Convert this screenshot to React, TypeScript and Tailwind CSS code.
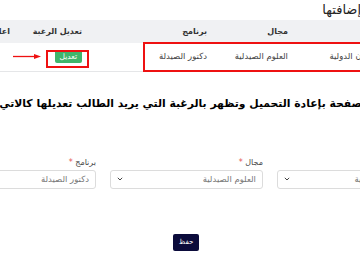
const selects = [
  { label: 'الجامعة', value: 'جامعة عمان الدولية' },
  { label: 'مجال', value: 'العلوم الصيدلية' },
  { label: 'برنامج', value: 'دكتور الصيدلة' },
]

function Chevron() {
  return (
    <svg width="6" height="4" viewBox="0 0 6 4" className="shrink-0">
      <path d="M0.8 0.8 L3 3 L5.2 0.8" fill="none" stroke="#444" strokeWidth="1" />
    </svg>
  )
}

export default function App() {
  return (
    <div className="h-[262px] w-[360px] overflow-hidden bg-white font-['DejaVu_Sans',sans-serif]">
      <div dir="rtl" className="relative ml-[-70px] mr-[-82px]">
        <div className="h-[20px] pr-[81px] text-[13px] leading-[20px] text-[#222]">إضافتها</div>

        <table className="w-full table-fixed border-collapse text-[8.5px]">
          <thead>
            <tr className="h-[23px] bg-[#f0f1f3] text-right text-[8px] text-[#333]">
              <th className="w-[146px] pr-[8px] font-semibold">الجامعة</th>
              <th className="w-[81px] pr-[8px] font-semibold">مجال</th>
              <th className="w-[125px] pr-[8px] font-semibold">برنامج</th>
              <th className="w-[72px] pr-[8px] font-semibold">تعديل الرغبة</th>
              <th className="w-[88px] pr-[8px] font-semibold">اعادة</th>
            </tr>
          </thead>
          <tbody>
            <tr className="h-[28px] border-b border-[#e5e6e8] text-right text-[#444]">
              <td className="pr-[44px] whitespace-nowrap">جامعة عمان الدولية</td>
              <td className="pr-[8px] whitespace-nowrap">العلوم الصيدلية</td>
              <td className="pr-[8px] whitespace-nowrap">دكتور الصيدلة</td>
              <td className="pr-[8px]">
                <span className="inline-block rounded-[2px] bg-[#3fb56b] px-[5px] text-[7.5px] leading-[13px] text-white">
                  تعديل
                </span>
              </td>
              <td className="pr-[8px]"></td>
            </tr>
          </tbody>
        </table>

        {/* annotations */}
        <div className="absolute left-[213px] top-[42px] h-[30px] w-[240px] border-2 border-[#ee1111]" />
        <div className="absolute left-[116px] top-[50px] h-[18px] w-[43px] border-2 border-[#ee1111]" />
        <svg className="absolute left-[82px] top-[52px]" width="30" height="9" viewBox="0 0 30 9">
          <line x1="1" y1="4.5" x2="24" y2="4.5" stroke="#ee1111" strokeWidth="1.3" />
          <path d="M22 2 L29 4.5 L22 7 Z" fill="#ee1111" />
        </svg>

        <p className="mt-[23px] whitespace-nowrap pr-[80px] text-[10.8px] font-bold leading-[18px] text-black">
          صفحة بإعادة التحميل وتظهر بالرغبة التي يريد الطالب تعديلها كالاتي
        </p>

        <div className="mt-[44px] flex gap-[14px] pr-[12px]">
          {selects.map((s) => (
            <div key={s.label} className="w-[153px] shrink-0">
              <div className="h-[12px] text-[8px] leading-[12px] text-[#444]">
                {s.label} <span className="text-[#e55353]">*</span>
              </div>
              <div className="mt-[1px] flex h-[19px] items-center justify-between rounded-[3px] border border-[#dcdcdc] px-[6px]">
                <span className="whitespace-nowrap text-[8.5px] text-[#777]">{s.value}</span>
                <Chevron />
              </div>
            </div>
          ))}
        </div>

        <div className="mt-[45px] flex justify-center">
          <button className="h-[17px] w-[26px] rounded-[2px] bg-[#0b0b3b] text-[7px] leading-[17px] text-white">
            حفظ
          </button>
        </div>
      </div>
    </div>
  )
}
